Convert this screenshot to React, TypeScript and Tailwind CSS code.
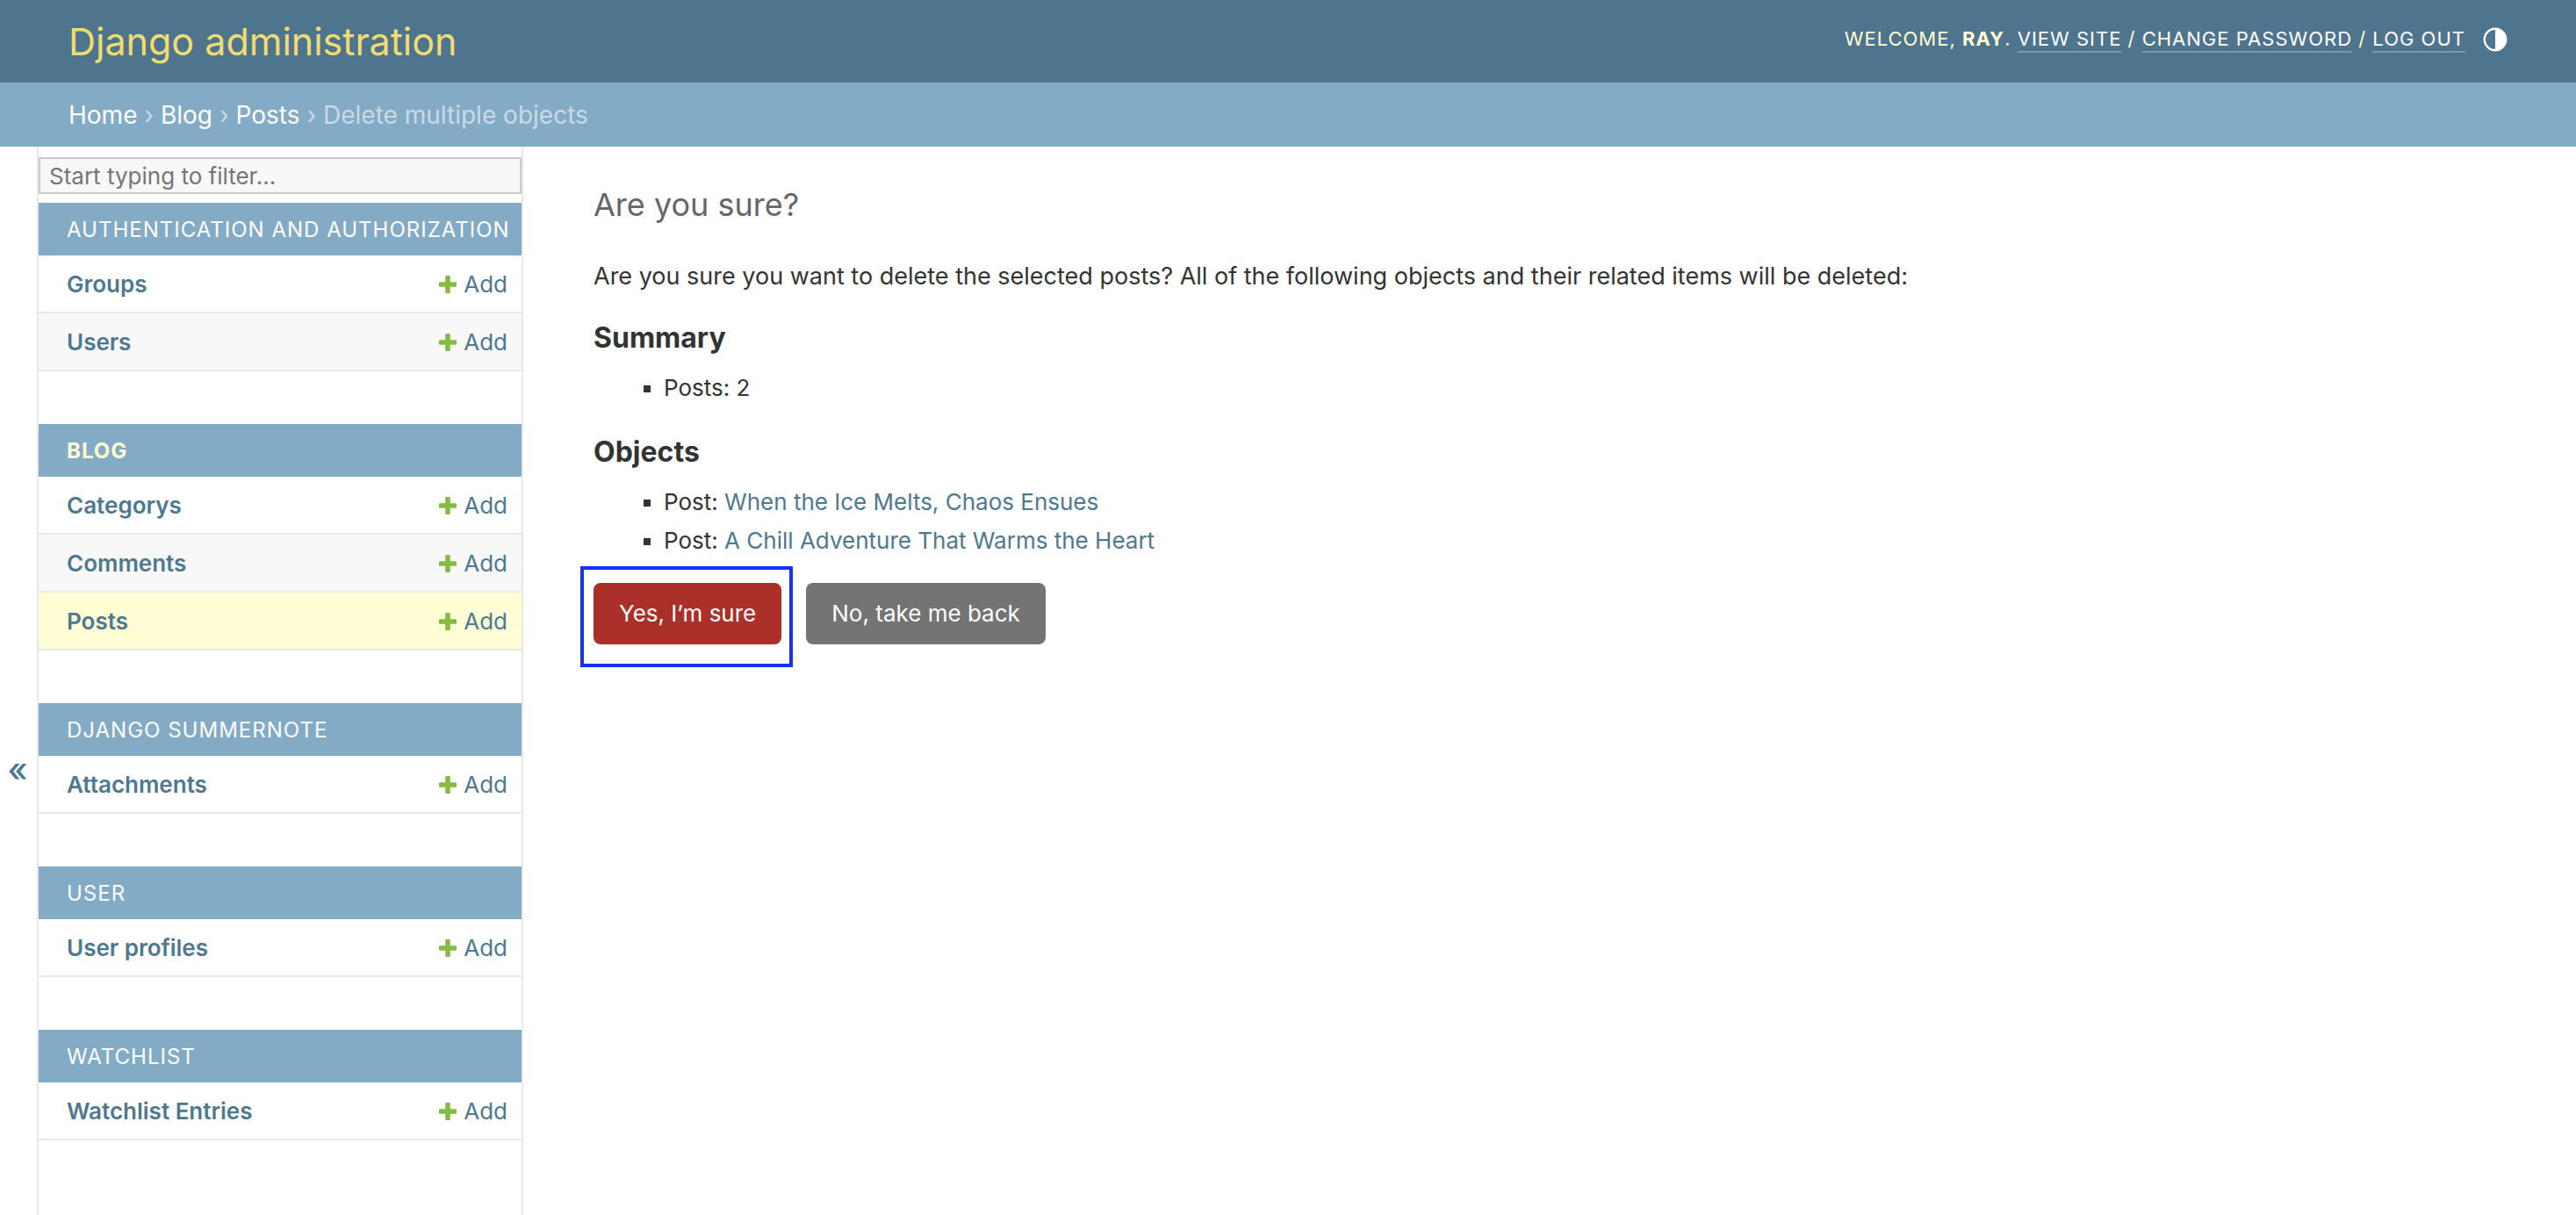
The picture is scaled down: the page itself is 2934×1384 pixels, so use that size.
type Section = { name: string; current?: boolean; models: { name: string; current?: boolean }[] };

const SECTIONS: Section[] = [
  { name: 'Authentication and Authorization', models: [{ name: 'Groups' }, { name: 'Users' }] },
  {
    name: 'Blog',
    current: true,
    models: [{ name: 'Categorys' }, { name: 'Comments' }, { name: 'Posts', current: true }],
  },
  { name: 'Django Summernote', models: [{ name: 'Attachments' }] },
  { name: 'User', models: [{ name: 'User profiles' }] },
  { name: 'Watchlist', models: [{ name: 'Watchlist Entries' }] },
];

const OBJECTS = ['When the Ice Melts, Chaos Ensues', 'A Chill Adventure That Warms the Heart'];

function PlusIcon() {
  return (
    <svg viewBox="0 0 20 20" className="size-5" aria-hidden="true">
      <rect x="0" y="7.2" width="20" height="5.6" rx="1" fill="#85bb44" />
      <rect x="7.2" y="0" width="5.6" height="20" rx="1" fill="#85bb44" />
    </svg>
  );
}

function ContrastIcon() {
  return (
    <svg viewBox="0 0 28 28" className="size-7" aria-hidden="true">
      <circle cx="14" cy="14" r="12.2" fill="none" stroke="#fff" strokeWidth="2.4" />
      <path d="M14 1.5a12.5 12.5 0 0 1 0 25z" fill="#fff" />
    </svg>
  );
}

function Header() {
  const link = 'border-b-2 border-[#7d98ad] pb-px text-white';
  return (
    <header className="flex h-[94px] items-center justify-between bg-[#4f748e] px-[78px]">
      <h1 className="text-[43px] leading-[56px] font-normal text-[#f0dd72]">
        <a href="#home">Django administration</a>
      </h1>
      <div className="flex items-center gap-5 pb-1 text-[22px] leading-[28px] tracking-[1px] text-[#fffed4] uppercase">
        <div>
          Welcome, <strong className="font-bold">Ray</strong>.{' '}
          <a href="#site" className={link}>View site</a> /{' '}
          <a href="#password" className={link}>Change password</a> /{' '}
          <button type="button" className="border-b-2 border-[#7d98ad] tracking-[1px] text-white uppercase">
            Log out
          </button>
        </div>
        <button type="button" aria-label="Toggle theme">
          <ContrastIcon />
        </button>
      </div>
    </header>
  );
}

function Breadcrumbs() {
  return (
    <nav aria-label="Breadcrumbs" className="h-[73px] bg-[#84abc5] px-[78px] py-[18px] text-[28px] leading-[38px] text-[#c8dae6]">
      <a href="#home" className="text-white">Home</a> › <a href="#blog" className="text-white">Blog</a> ›{' '}
      <a href="#posts" className="text-white">Posts</a> › Delete multiple objects
    </nav>
  );
}

function SectionTable({ section }: { section: Section }) {
  return (
    <table className="mb-[60px] w-full border-separate border-spacing-0 text-[26px] leading-8">
      <caption
        className={
          section.current
            ? 'h-[60px] bg-[#84abc5] pt-[15px] pl-8 text-left text-[24px] font-bold tracking-[1px] whitespace-nowrap text-[#fffed4] uppercase'
            : 'h-[60px] bg-[#84abc5] pt-[15px] pl-8 text-left text-[24px] tracking-[1px] whitespace-nowrap text-white uppercase'
        }
      >
        <a href="#app">{section.name}</a>
      </caption>
      <tbody>
        {section.models.map((model) => (
          <tr key={model.name} className={model.current ? 'bg-[#fffed4]' : 'even:bg-[#f8f8f8]'}>
            <th
              scope="row"
              className="h-[66px] border-b-2 border-[#e8e8e8] pt-0.5 pl-8 text-left font-semibold text-[#4e7790]"
            >
              <a href="#model">{model.name}</a>
            </th>
            <td className="h-[66px] border-b-2 border-[#e8e8e8] pt-0.5 pr-4 text-[#4e7790]">
              <a href="#add" className="flex items-center justify-end gap-2">
                <PlusIcon />
                Add
              </a>
            </td>
          </tr>
        ))}
      </tbody>
    </table>
  );
}

export default function App() {
  return (
    <div className="flex h-screen flex-col overflow-hidden bg-white font-['Inter',sans-serif] text-[#333]">
      <Header />
      <Breadcrumbs />
      <div className="flex min-h-0 flex-1">
        <button
          type="button"
          aria-label="Toggle navigation"
          className="w-11 shrink-0 border-r-2 border-[#e8e8e8] pt-[202px] pr-0.5 text-[38px] font-medium text-[#4e7790]"
        >
          «
        </button>
        <nav aria-label="Sidebar" className="w-[552px] shrink-0 overflow-hidden border-r-2 border-[#e8e8e8] pt-3">
          <input
            type="search"
            aria-label="Filter navigation items"
            placeholder="Start typing to filter…"
            className="mb-2.5 block h-[42px] w-full border-2 border-[#cbcbcb] bg-[#f8f8f8] px-2.5 text-[26px] placeholder:text-[#757575]"
          />
          {SECTIONS.map((section) => (
            <SectionTable key={section.name} section={section} />
          ))}
        </nav>
        <main className="min-w-0 flex-1 px-20 pt-10">
          <h2 className="mb-[34px] text-[36px] leading-[52px] font-normal text-[#666]">Are you sure?</h2>
          <p className="text-[27px] leading-[44px]">
            Are you sure you want to delete the selected posts? All of the following objects and their related items
            will be deleted:
          </p>
          <h3 className="mt-7 text-[32px] leading-[40px] font-bold">Summary</h3>
          <ul className="mt-[15px] list-[square] pl-20 text-[26px] leading-[44px]">
            <li>Posts: 2</li>
          </ul>
          <h3 className="mt-[31px] text-[32px] leading-[40px] font-bold">Objects</h3>
          <ul className="mt-[15px] list-[square] pl-20 text-[26px] leading-[44px]">
            {OBJECTS.map((title) => (
              <li key={title}>
                Post: <a href="#post" className="text-[#4e7790]">{title}</a>
              </li>
            ))}
          </ul>
          <form className="mt-[26px] flex gap-7 text-[26px] leading-[30px] text-white">
            <div className="relative">
              <button type="button" className="rounded-lg bg-[#ab302a] px-[29px] py-5">
                Yes, I’m sure
              </button>
              <div className="pointer-events-none absolute -top-[19px] -right-[13px] -bottom-[26px] -left-[15px] border-4 border-[#1232fb]" />
            </div>
            <a href="#back" className="rounded-lg bg-[#747474] px-[29px] py-5">
              No, take me back
            </a>
          </form>
        </main>
      </div>
    </div>
  );
}
